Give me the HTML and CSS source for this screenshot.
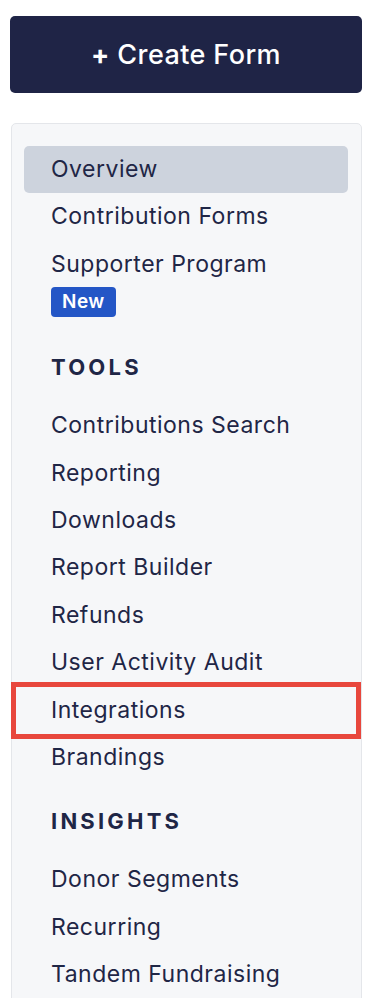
FILE: index.html
```html
<!DOCTYPE html>
<html lang="en">
<head>
    <meta charset="UTF-8">
    <meta name="viewport" content="width=device-width, initial-scale=1.0">
    <title>Dashboard Navigation</title>
    <link rel="stylesheet" href="styles.css">
</head>
<body>
    <div class="sidebar">
        <button class="create-btn"><span class="plus">+</span> Create Form</button>

        <nav class="nav-panel">
            <ul class="nav-list">
                <li class="nav-item active">Overview</li>
                <li class="nav-item">Contribution Forms</li>
                <li class="nav-item">
                    Supporter Program
                    <span class="badge">New</span>
                </li>
            </ul>

            <h4 class="nav-heading">TOOLS</h4>
            <ul class="nav-list">
                <li class="nav-item">Contributions Search</li>
                <li class="nav-item">Reporting</li>
                <li class="nav-item">Downloads</li>
                <li class="nav-item">Report Builder</li>
                <li class="nav-item">Refunds</li>
                <li class="nav-item">User Activity Audit</li>
                <li class="nav-item highlighted">Integrations</li>
                <li class="nav-item">Brandings</li>
            </ul>

            <h4 class="nav-heading">INSIGHTS</h4>
            <ul class="nav-list">
                <li class="nav-item">Donor Segments</li>
                <li class="nav-item">Recurring</li>
                <li class="nav-item">Tandem Fundraising</li>
            </ul>
        </nav>
    </div>
</body>
</html>
```
FILE: styles.css
```css
body {
    font-family: Inter, "Noto Sans", Arial, sans-serif;
    margin: 0;
    padding: 16px 12px 0 10px;
    background-color: #ffffff;
    color: #1f2646;
}

.sidebar {
    display: flex;
    flex-direction: column;
}

.create-btn {
    height: 77px;
    width: 100%;
    background-color: #1f2446;
    color: white;
    border: none;
    border-radius: 5px;
    font-family: inherit;
    font-size: 27px;
    font-weight: 500;
    letter-spacing: 0.4px;
    cursor: pointer;
}

.create-btn .plus {
    font-weight: 700;
}

.nav-panel {
    margin: 30px 0 0 1px;
    padding: 22px 13px 60px 12px;
    background-color: #f6f7f9;
    border: 1px solid #e4e6ea;
    border-radius: 5px;
}

.nav-list {
    list-style: none;
    margin: 0;
    padding: 0;
}

.nav-item {
    position: relative;
    padding: 10px 27px;
    font-size: 23px;
    line-height: 27.4px;
    letter-spacing: 0.5px;
    border-radius: 5px;
}

.nav-item.active {
    background-color: #cdd3dd;
}

.nav-item.highlighted::after {
    content: "";
    position: absolute;
    top: -5px;
    bottom: -5px;
    left: -13px;
    right: -13px;
    border: 5.5px solid #e8473d;
}

.badge {
    display: block;
    width: fit-content;
    margin-top: 9px;
    padding: 0 11px;
    height: 30px;
    line-height: 30px;
    background-color: #2456c6;
    color: white;
    font-size: 19px;
    font-weight: 600;
    letter-spacing: 0.5px;
    border-radius: 4px;
}

.nav-heading {
    margin: 26px 0 21px;
    padding-left: 27px;
    font-size: 22px;
    line-height: 28px;
    font-weight: 700;
    letter-spacing: 3.2px;
}
```
